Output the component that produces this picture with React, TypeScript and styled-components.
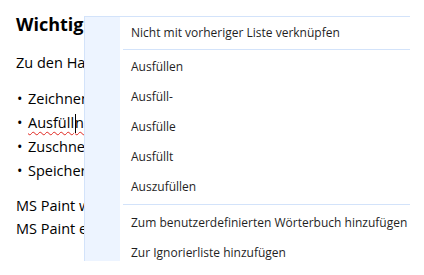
import styled, { createGlobalStyle } from 'styled-components';

const GlobalStyle = createGlobalStyle`
    html, body {
        margin: 0;
        padding: 0;
        background: #fff;
    }
    body {
        width: 424px;
        height: 275px;
        overflow: hidden;
    }
`;

const menuGroups = [
    ['Nicht mit vorheriger Liste verknüpfen'],
    ['Ausfüllen', 'Ausfüll-', 'Ausfülle', 'Ausfüllt', 'Auszufüllen'],
    ['Zum benutzerdefinierten Wörterbuch hinzufügen', 'Zur Ignorierliste hinzufügen'],
];

const bullets = ['Zeichnen', 'Ausfülln', 'Zuschneiden', 'Speichern'];

export default function App() {
    return (
        <Page>
            <GlobalStyle />
            <Doc>
                <Heading>Wichtige Funktionen</Heading>
                <Para>Zu den Hauptfunktionen gehören:</Para>
                <List>
                    {bullets.map(item => (
                        <Bullet key={item}>
                            {item === 'Ausfülln' ? (
                                <Misspelled>
                                    Ausfüll
                                    <Caret />
                                    n
                                </Misspelled>
                            ) : (
                                item
                            )}
                        </Bullet>
                    ))}
                </List>
                <Line>MS Paint war lange Zeit vorinstalliert.</Line>
                <Line>MS Paint eignet sich für einfache Bilder.</Line>
            </Doc>
            <Menu>
                <Gutter />
                <Items>
                    {menuGroups.map((group, gi) => (
                        <Group key={gi} $first={gi === 0}>
                            {group.map(label => (
                                <Item key={label}>{label}</Item>
                            ))}
                        </Group>
                    ))}
                </Items>
            </Menu>
        </Page>
    );
}

const Page = styled.div`
    position: relative;
    width: 424px;
    height: 275px;
    overflow: hidden;
    background: #fff;
`;

const Doc = styled.div`
    padding: 12px 16px 0 16px;
    font-family: 'Open Sans', 'Noto Sans', sans-serif;
    font-size: 14.5px;
    color: #000;
`;

const Heading = styled.div`
    font-size: 18px;
    font-weight: 700;
    line-height: 24px;
    margin-bottom: 15px;
`;

const Para = styled.div`
    line-height: 24px;
    margin-bottom: 12px;
    white-space: nowrap;
`;

const Line = styled.div`
    line-height: 23px;
    white-space: nowrap;
`;

const List = styled.ul`
    list-style: none;
    margin: 0 0 11px 0;
    padding: 0;
`;

const Bullet = styled.li`
    line-height: 24px;
    white-space: nowrap;
    &::before {
        content: '•';
        display: inline-block;
        width: 11px;
        padding-left: 1px;
    }
`;

const Misspelled = styled.span`
    position: relative;
    text-decoration: underline wavy #e0261f;
    text-decoration-thickness: 1px;
    text-underline-offset: 3px;
`;

const Caret = styled.span`
    display: inline-block;
    width: 1px;
    height: 19px;
    margin: 0 -1px 0 1px;
    background: #000;
    vertical-align: -5px;
`;

const Menu = styled.div`
    position: absolute;
    left: 84px;
    top: 16px;
    width: 325px;
    height: 244px;
    display: flex;
    background: #fff;
    border-top: 1px solid #d3e3fa;
    border-left: 1px solid #d3e3fa;
    overflow: hidden;
    font-family: 'Open Sans', 'Noto Sans', sans-serif;
    font-size: 12px;
    color: #1f1f1f;
`;

const Gutter = styled.div`
    width: 35px;
    flex: none;
    background: #edf4ff;
`;

const Items = styled.div`
    flex: 1;
    display: flex;
    flex-direction: column;
    padding-left: 3px;
`;

const Group = styled.div<{ $first: boolean }>`
    display: flex;
    flex-direction: column;
    ${p =>
        p.$first
            ? ''
            : 'border-top: 1px solid #d3e3fa; margin-top: 2px; padding-top: 1px;'}
    &:last-child {
        margin-top: 3px;
        padding-top: 2px;
    }
`;

const Item = styled.div`
    box-sizing: border-box;
    height: 30px;
    padding-top: 2px;
    line-height: 28px;
    padding-left: 8px;
    white-space: nowrap;
`;
